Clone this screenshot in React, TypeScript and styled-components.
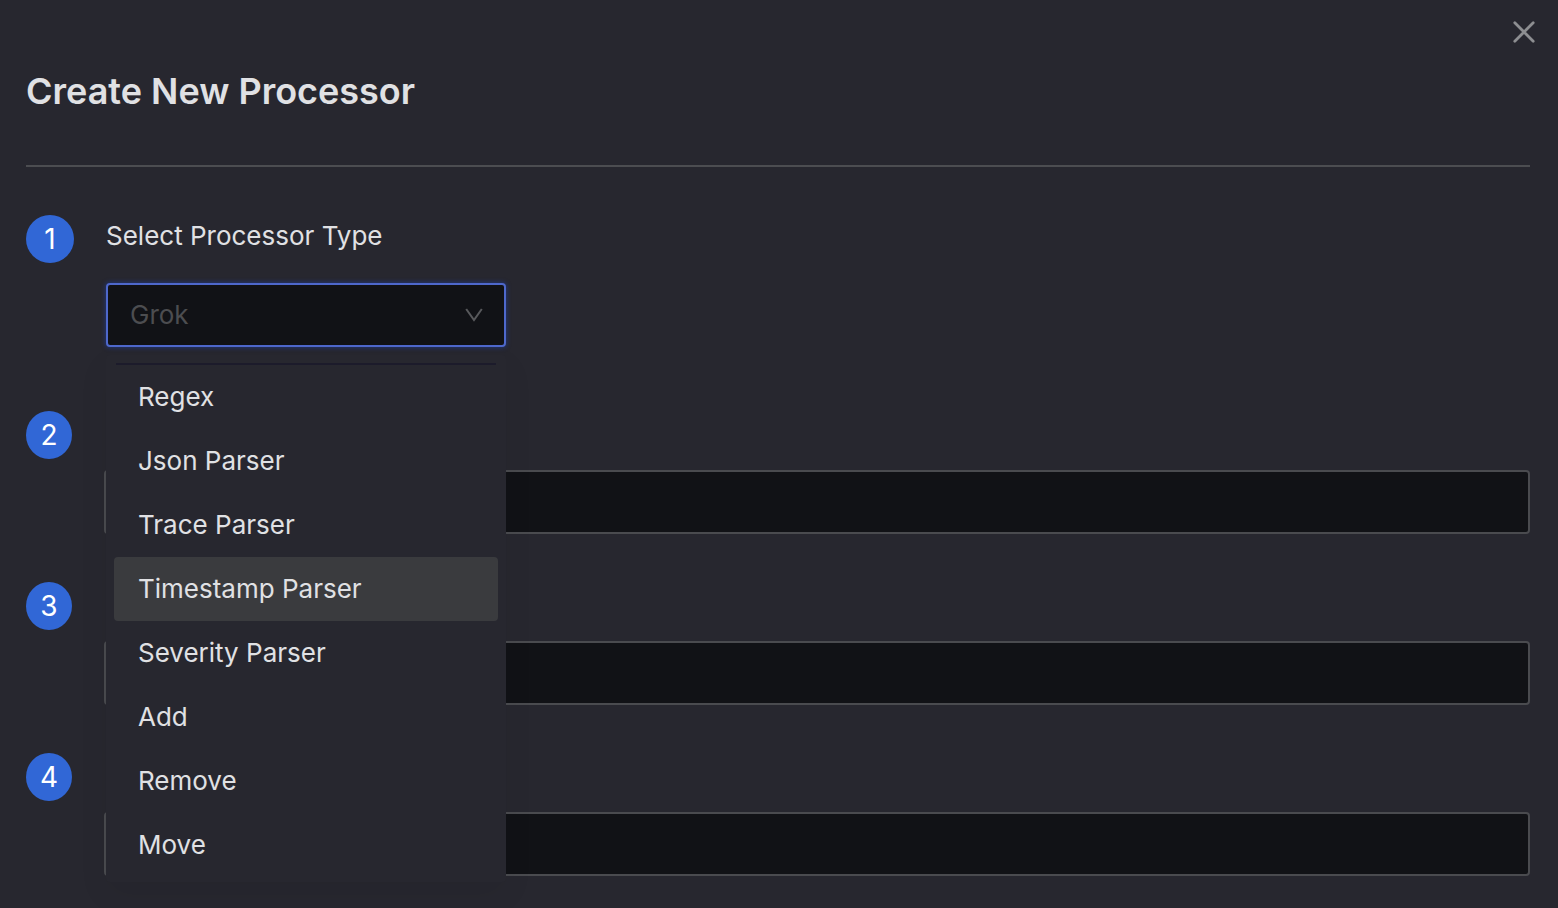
import React, { useState } from "react";
import styled, { createGlobalStyle } from "styled-components";

const GlobalStyle = createGlobalStyle`
  * { box-sizing: border-box; }
  body {
    margin: 0;
    background: #27272f;
    color: #e0e1e4;
    font-family: Inter, "Liberation Sans", sans-serif;
    font-size: 26px;
    line-height: 32px;
  }
`;

const Drawer = styled.main`
  position: relative;
  padding: 64px 28px 32px 26px;
`;

const CloseButton = styled.button`
  position: absolute;
  top: 16px;
  right: 18px;
  display: flex;
  padding: 0;
  border: 0;
  background: none;
  color: #8d8e91;
  cursor: pointer;
`;

const Header = styled.header`
  padding-bottom: 47px;
  border-bottom: 2px solid #4c4d51;
`;

const Title = styled.h1`
  margin: 0;
  font-size: 36px;
  font-weight: 600;
  line-height: 54px;
`;

const Form = styled.form`
  display: flex;
  flex-direction: column;
  gap: 48px;
  padding-top: 48px;
`;

const Step = styled.div`
  display: flex;
  gap: 32px;
`;

const Badge = styled.label<{ $wide?: boolean }>`
  display: flex;
  flex: none;
  align-items: center;
  justify-content: center;
  width: ${(p) => (p.$wide ? 48 : 46)}px;
  height: 48px;
  border-radius: 50%;
  background: #3167d6;
  color: #fff;
  font-size: 28px;
`;

const StepBody = styled.div<{ $offset: number }>`
  flex: 1;
  min-width: 0;
  padding-top: ${(p) => p.$offset}px;
`;

const FieldLabel = styled.label`
  display: block;
  margin-bottom: 31px;
`;

const TextField = styled.input`
  display: block;
  width: 100%;
  height: 64px;
  padding: 0 24px;
  border: 2px solid #4a4b4f;
  border-radius: 4px;
  outline: 0;
  background: #111216;
  color: inherit;
  font: inherit;
`;

const SelectBox = styled.div`
  position: relative;
  width: 400px;
  margin-bottom: 16px;
`;

const Select = styled.select`
  display: block;
  width: 100%;
  height: 64px;
  padding: 0 56px 0 22px;
  appearance: none;
  border: 2px solid #4e68cc;
  border-radius: 4px;
  outline: 0;
  box-shadow: 0 0 4px 1px #22336f;
  background: #111216;
  color: #4c4d50;
  font: inherit;
`;

const Chevron = styled.svg`
  position: absolute;
  top: 24px;
  right: 23px;
  pointer-events: none;
`;

const Menu = styled.div`
  position: absolute;
  z-index: 1;
  top: calc(100% + 8px);
  left: 0;
  width: 100%;
  padding: 8px 8px 5px;
  border-radius: 4px;
  background: #27272f;
  box-shadow: 0 12px 32px rgba(0, 0, 0, 0.06);
`;

const MenuDivider = styled.div`
  height: 2px;
  margin: 0 2px;
  background: #1c1b2b;
`;

const Option = styled.button<{ $active: boolean }>`
  display: block;
  width: 100%;
  height: 64px;
  padding: 0 24px;
  border: 0;
  border-radius: 4px;
  background: ${(p) => (p.$active ? "#3a3b3e" : "transparent")};
  color: inherit;
  font: inherit;
  text-align: left;
  cursor: pointer;
`;

const processors = [
  "Regex",
  "Json Parser",
  "Trace Parser",
  "Timestamp Parser",
  "Severity Parser",
  "Add",
  "Remove",
  "Move",
];

export default function App() {
  const [active, setActive] = useState("Timestamp Parser");

  return (
    <>
      <GlobalStyle />
      <Drawer>
        <CloseButton type="button" aria-label="Close">
          <svg width="32" height="32" viewBox="0 0 32 32" fill="none" stroke="currentColor" strokeWidth="2.8" strokeLinecap="round">
            <path d="M6.8 6.8 25.2 25.2M25.2 6.8 6.8 25.2" />
          </svg>
        </CloseButton>
        <Header>
          <Title>Create New Processor</Title>
        </Header>
        <Form>
          <Step>
            <Badge as="span" $wide>1</Badge>
            <StepBody $offset={5}>
              <FieldLabel htmlFor="processor-type">Select Processor Type</FieldLabel>
              <SelectBox>
                <Select id="processor-type" defaultValue="Grok">
                  <option>Grok</option>
                </Select>
                <Chevron width="18" height="16" viewBox="0 0 18 16" fill="none" stroke="#58595c" strokeWidth="2">
                  <path d="M1.2 2 9 13 16.8 2" />
                </Chevron>
                <Menu role="listbox" aria-labelledby="processor-type">
                  <MenuDivider />
                  {processors.map((name) => (
                    <Option
                      key={name}
                      type="button"
                      role="option"
                      aria-selected={name === active}
                      $active={name === active}
                      onMouseEnter={() => setActive(name)}
                    >
                      {name}
                    </Option>
                  ))}
                </Menu>
              </SelectBox>
            </StepBody>
          </Step>
          {[2, 3, 4].map((step) => (
            <Step key={step}>
              <Badge htmlFor={`step-${step}`}>{step}</Badge>
              <StepBody $offset={59}>
                <TextField id={`step-${step}`} type="text" />
              </StepBody>
            </Step>
          ))}
        </Form>
      </Drawer>
    </>
  );
}
